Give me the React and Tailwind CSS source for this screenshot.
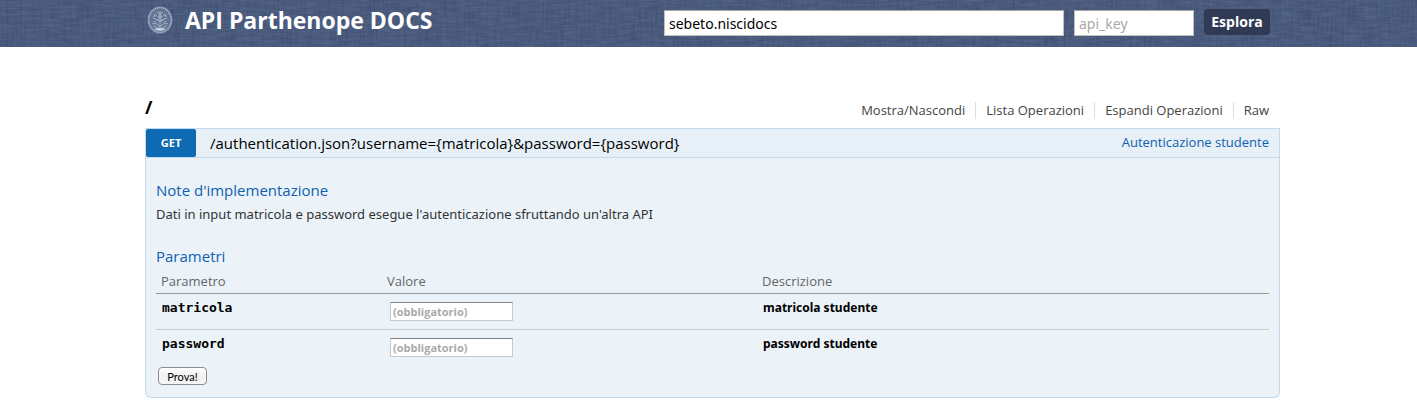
const parameters = [
  { name: "matricola", description: "matricola studente" },
  { name: "password", description: "password studente" },
];

const operations = ["Mostra/Nascondi", "Lista Operazioni", "Espandi Operazioni", "Raw"];

function Seal() {
  return (
    <svg viewBox="0 0 26 28" className="h-7 w-[26px] shrink-0" fill="none" aria-hidden="true">
      <ellipse cx="13" cy="14" rx="12" ry="13" fill="#8391ad" fillOpacity="0.5" />
      <ellipse cx="13" cy="14" rx="11.4" ry="12.6" stroke="#a3afc5" strokeWidth="1.8" strokeDasharray="1.6 0.6" />
      <ellipse cx="13" cy="14" rx="9.2" ry="10.4" stroke="#5b6a89" strokeWidth="0.7" />
      <path d="M13 5v15M13 12l-5-4M13 12l5-4M13 15l-7-3M13 15l7-3M8 8l-1 3M18 8l1 3M10 6l3 3 3-3M7 16l4-2M19 16l-4-2" stroke="#a9b5ca" strokeWidth="1" />
      <path d="M9 7l2 3M17 7l-2 3M6 14l4 1M20 14l-4 1M9 11l2 2M17 11l-2 2" stroke="#52617f" strokeWidth="0.9" />
      <path d="M5 18c3-2 5 0 8 3 3-3 5-5 8-3M6 20c3 1 4 1 5 3h4c1-2 2-2 5-3" stroke="#9eabc2" strokeWidth="1" />
      <path d="M7 23q6-3 12 0-6 4-12 0z" fill="#c3ccdb" />
      <circle cx="13" cy="11" r="2.2" fill="#97a5be" fillOpacity="0.7" />
    </svg>
  );
}

function Weave() {
  return (
    <svg className="absolute inset-0 h-full w-full" aria-hidden="true">
      <filter id="weave-v" x="0" y="0" width="100%" height="100%" colorInterpolationFilters="sRGB">
        <feTurbulence type="fractalNoise" baseFrequency="0.45 0.04" numOctaves="2" seed="4" />
        <feColorMatrix values="0 0 0 0 0.22  0 0 0 0 0.28  0 0 0 0 0.42  1.2 0 0 0 -0.45" />
      </filter>
      <filter id="weave-h" x="0" y="0" width="100%" height="100%" colorInterpolationFilters="sRGB">
        <feTurbulence type="fractalNoise" baseFrequency="0.05 0.45" numOctaves="2" seed="9" />
        <feColorMatrix values="0 0 0 0 0.36  0 0 0 0 0.43  0 0 0 0 0.57  1.2 0 0 0 -0.45" />
      </filter>
      <rect width="100%" height="100%" filter="url(#weave-v)" />
      <rect width="100%" height="100%" filter="url(#weave-h)" />
    </svg>
  );
}

export default function App() {
  return (
    <div className="bg-white font-['Open_Sans','Noto_Sans',sans-serif] text-black">
      <header className="relative bg-[#4a5a7b]">
        <Weave />
        <div className="relative flex h-[47px] items-start justify-between pr-[147px] pl-[147px]">
          <a href="#" className="flex items-center gap-3 pt-1 text-white">
            <Seal />
            <span className="text-[23px] leading-8 font-bold whitespace-nowrap">API Parthenope DOCS</span>
          </a>
          <form className="flex items-start gap-[10px] pt-[9px]" onSubmit={(e) => e.preventDefault()}>
            <input
              type="text"
              aria-label="URL"
              defaultValue="sebeto.niscidocs"
              className="mt-px h-[26px] w-[400px] border border-[#c3c1bd] border-t-[#a8a6a2] bg-white px-1 font-['Noto_Sans',sans-serif] text-sm"
            />
            <input
              type="text"
              aria-label="api_key"
              placeholder="api_key"
              className="mt-px h-[26px] w-[120px] border border-[#c3c1bd] border-t-[#a8a6a2] bg-white px-1 font-['Noto_Sans',sans-serif] text-sm placeholder:text-[#a9a9a9]"
            />
            <button type="submit" className="h-[26px] w-[66px] rounded bg-[#303a54] text-sm leading-none font-bold text-white">
              Esplora
            </button>
          </form>
        </div>
      </header>

      <main className="pt-12 pr-[137px] pb-4 pl-[145px]">
        <div className="flex h-[33px] items-start justify-between pr-[11px]">
          <h2 className="text-lg leading-6 font-bold">
            <a href="#">/</a>
          </h2>
          <ul className="flex pt-[7px] text-[13px] leading-[17px] text-[#444]">
            {operations.map((label) => (
              <li key={label} className="border-l border-[#ddd] px-[10px] first:border-l-0 last:pr-0">
                <a href="#">{label}</a>
              </li>
            ))}
          </ul>
        </div>

        <section>
          <h3 className="flex h-[30px] items-stretch justify-between border border-[#c3d9ec] bg-[#e7f0f7] pr-[10px]">
            <a href="#" className="flex items-center gap-[14px]">
              <span className="flex h-7 w-[50px] items-center justify-center rounded-xs bg-[#0f6ab4] text-[11px] font-bold text-white">
                GET
              </span>
              <span className="text-[15px] leading-6">/authentication.json?username=&#123;matricola&#125;&amp;password=&#123;password&#125;</span>
            </a>
            <a href="#" className="flex items-center text-[13px] text-[#0f60b0]">
              Autenticazione studente
            </a>
          </h3>

          <div className="rounded-b-md border border-t-0 border-[#c3d9ec] bg-[#ebf3f9] px-[10px] pt-[22px] pb-3">
            <h4 className="text-[15px] leading-5 text-[#0f60b0]">Note d'implementazione</h4>
            <p className="pt-[5px] font-['Noto_Sans',sans-serif] text-[13px] leading-[18px] text-[#333]">
              Dati in input matricola e password esegue l'autenticazione sfruttando un'altra API
            </p>
            <form onSubmit={(e) => e.preventDefault()}>
              <h4 className="pt-[23px] text-[15px] leading-5 text-[#0f60b0]">Parametri</h4>
              <table className="w-full table-fixed border-collapse">
                <colgroup>
                  <col className="w-[226px]" />
                  <col className="w-[375px]" />
                  <col />
                </colgroup>
                <thead>
                  <tr className="h-[27px] border-b border-[#999] text-left text-[13px] leading-[18px] text-[#666]">
                    <th className="px-[5px] pt-1 font-normal">Parametro</th>
                    <th className="px-[5px] pt-1 font-normal">Valore</th>
                    <th className="px-[5px] pt-1 font-normal">Descrizione</th>
                  </tr>
                </thead>
                <tbody>
                  {parameters.map(({ name, description }) => (
                    <tr key={name} className="h-9 border-b border-[#ccc] align-top last:border-b-0">
                      <td className="px-[6px] pt-[5px]">
                        <label htmlFor={name} className="block font-['DejaVu_Sans_Mono',monospace] text-[13px] leading-[18px] font-bold">
                          {name}
                        </label>
                      </td>
                      <td className="px-2 pt-2">
                        <input
                          id={name}
                          type="text"
                          placeholder="(obbligatorio)"
                          className="block h-[19px] w-[123px] border border-[#c8c8c8] border-t-[#808080] bg-white px-[2px] text-[11px] font-bold placeholder:text-[#a9a9a9]"
                        />
                      </td>
                      <td className="px-[6px] pt-[5px] font-['Noto_Sans',sans-serif] text-xs leading-[18px] font-bold">{description}</td>
                    </tr>
                  ))}
                </tbody>
              </table>
              <button
                type="submit"
                className="mt-[2px] ml-[2px] block h-[18px] w-[49px] rounded-[4px] border border-[#8d8d8d] bg-linear-to-b from-white via-[#f1f1f1] to-[#f6f6f6] font-['Lato',sans-serif] text-[11px] leading-none"
              >
                Prova!
              </button>
            </form>
          </div>
        </section>
      </main>
    </div>
  );
}
